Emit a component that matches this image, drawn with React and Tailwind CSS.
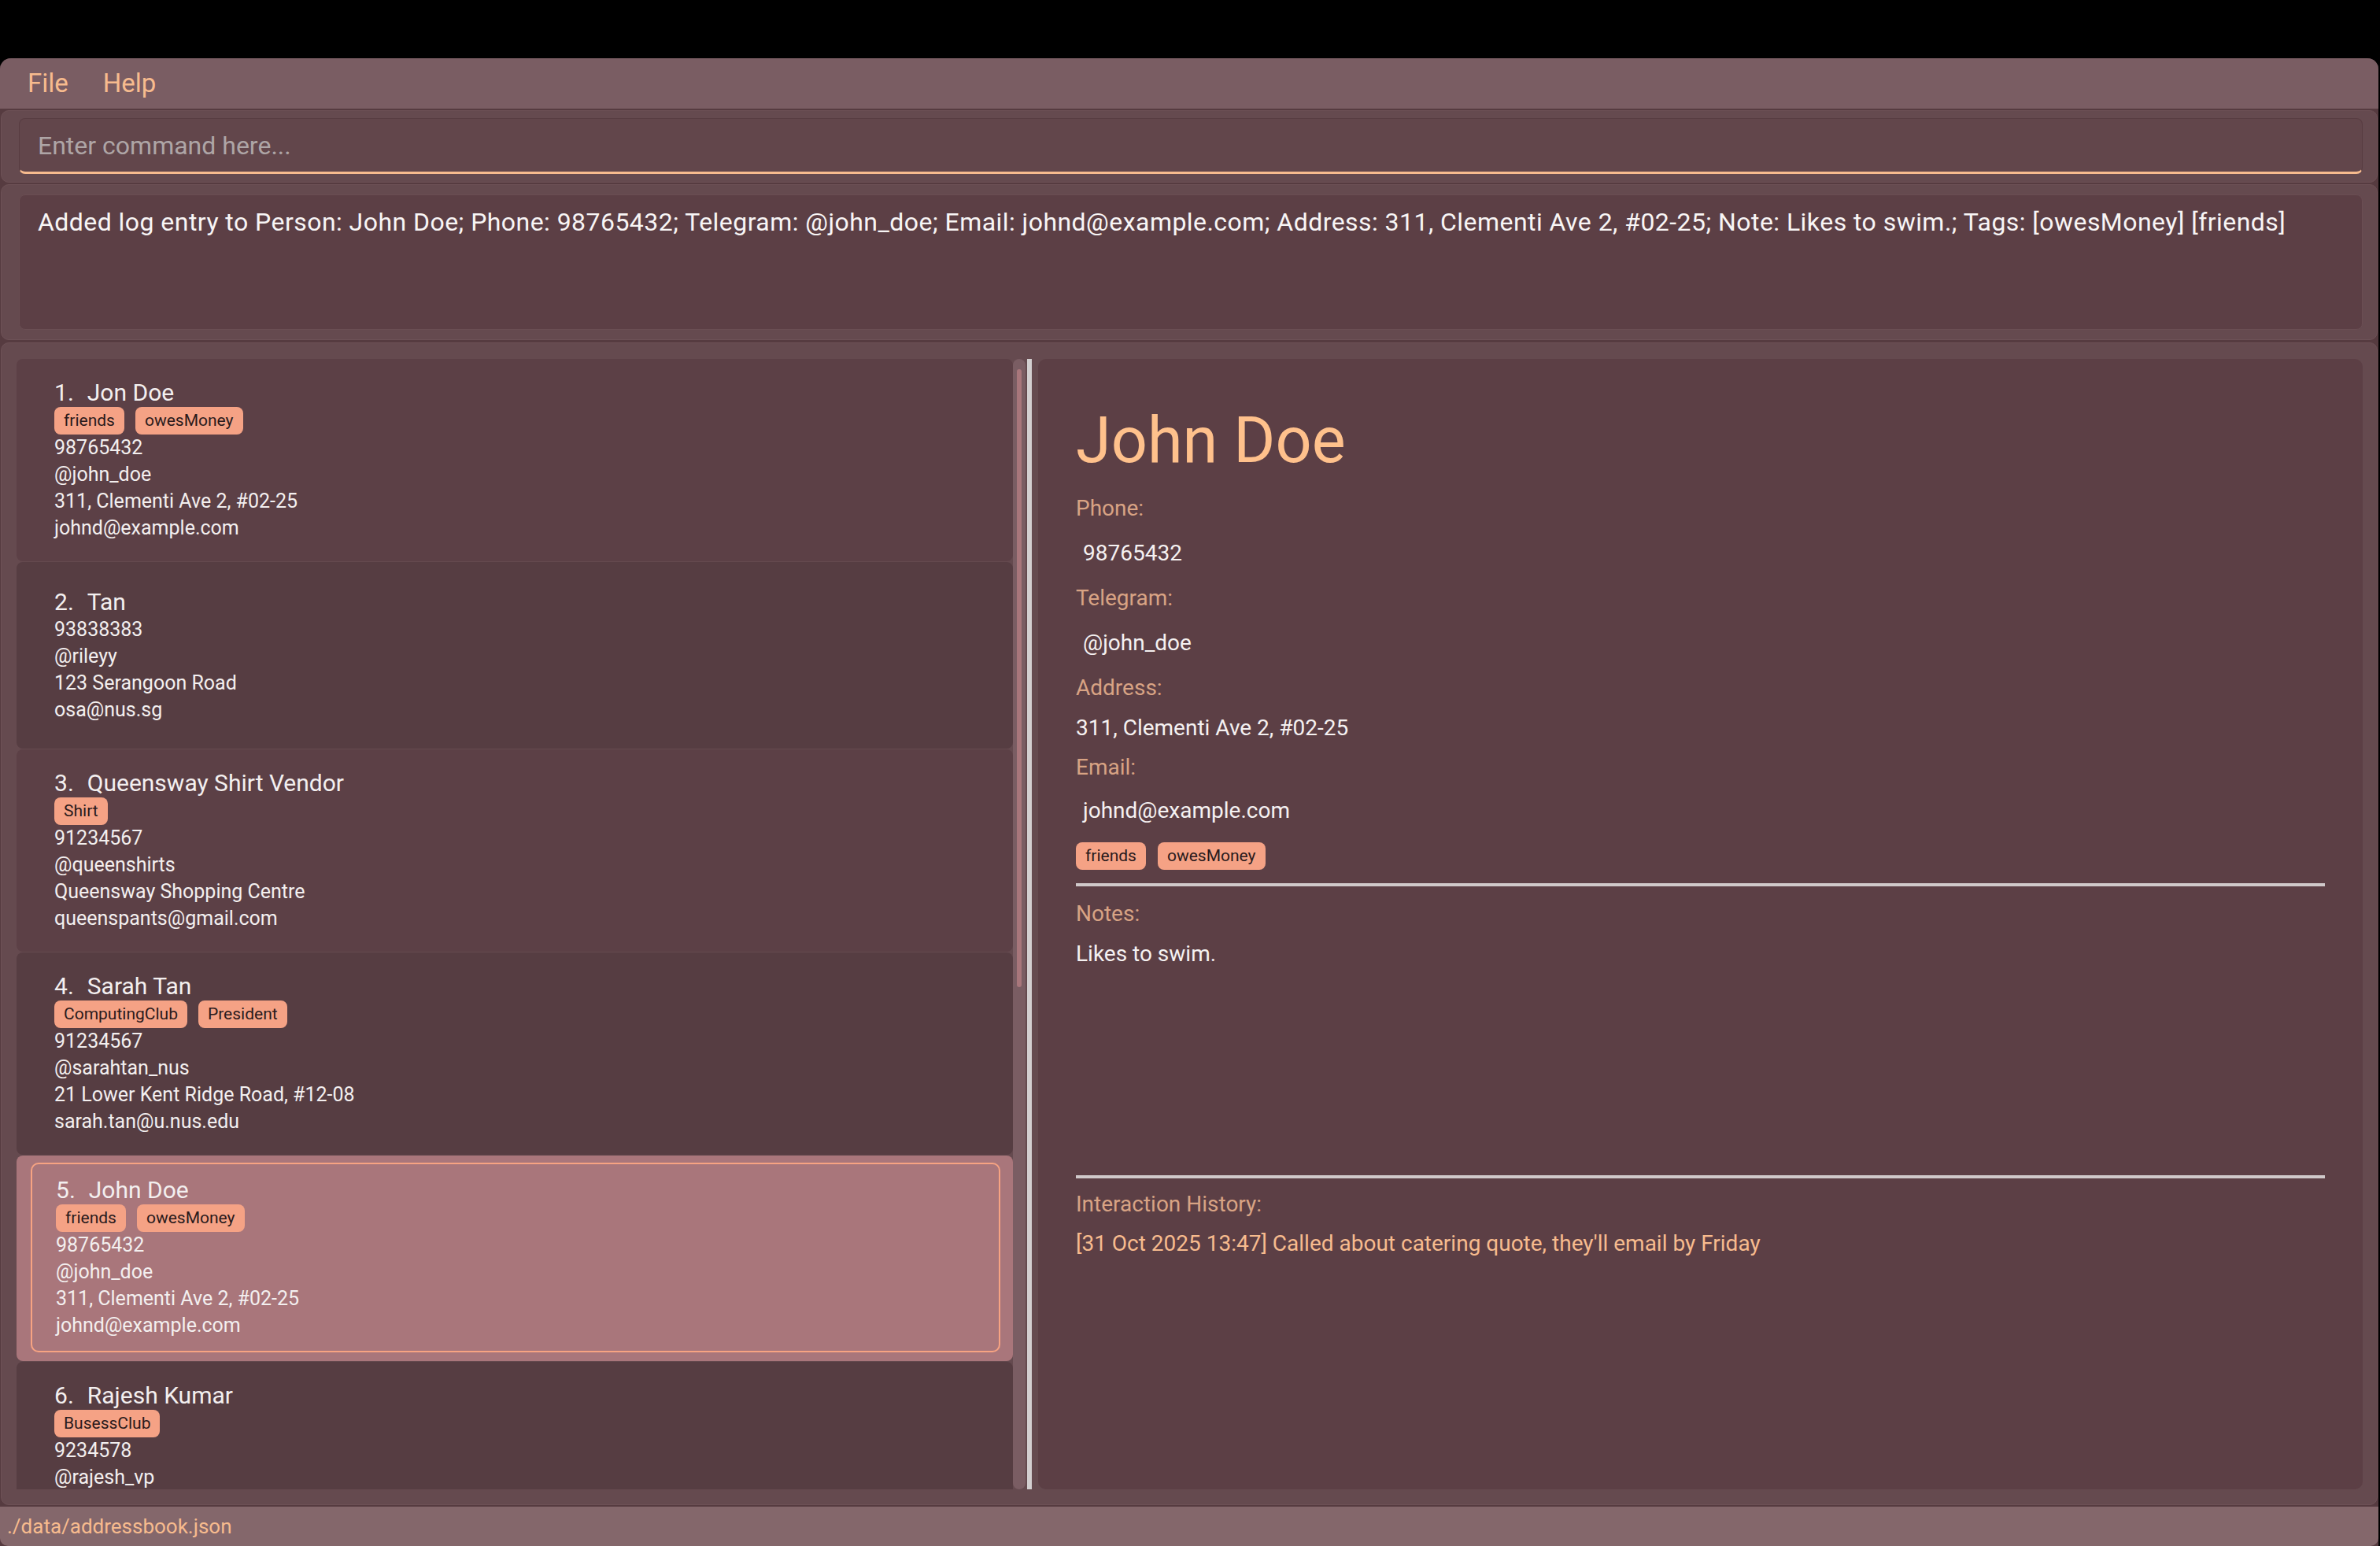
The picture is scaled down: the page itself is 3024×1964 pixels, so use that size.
const persons = [
  { name: 'Jon Doe', tags: ['friends', 'owesMoney'], phone: '98765432', tg: '@john_doe', address: '311, Clementi Ave 2, #02-25', email: 'johnd@example.com' },
  { name: 'Tan', tags: [], phone: '93838383', tg: '@rileyy', address: '123 Serangoon Road', email: 'osa@nus.sg' },
  { name: 'Queensway Shirt Vendor', tags: ['Shirt'], phone: '91234567', tg: '@queenshirts', address: 'Queensway Shopping Centre', email: 'queenspants@gmail.com' },
  { name: 'Sarah Tan', tags: ['ComputingClub', 'President'], phone: '91234567', tg: '@sarahtan_nus', address: '21 Lower Kent Ridge Road, #12-08', email: 'sarah.tan@u.nus.edu' },
  { name: 'John Doe', tags: ['friends', 'owesMoney'], phone: '98765432', tg: '@john_doe', address: '311, Clementi Ave 2, #02-25', email: 'johnd@example.com', selected: true },
  { name: 'Rajesh Kumar', tags: ['BusessClub'], phone: '9234578', tg: '@rajesh_vp', address: 'Blk 30 Geylang Street 29, #06-40', email: 'rajesh@example.com' },
];

const Tag = ({ label }) => (
  <span className="h-[35px] px-[12px] flex items-center rounded-[8px] bg-[#f5a285] text-[#2a1a1c] text-[21px] leading-[35px]">
    {label}
  </span>
);

const CardBody = ({ p, n }) => (
  <>
    <div className="flex text-[30px] leading-[36px] text-[#f3efef]">
      <span>{n}.</span>
      <span className="ml-[17px]">{p.name}</span>
    </div>
    {p.tags.length > 0 && (
      <div className="flex gap-[14px]">
        {p.tags.map(t => <Tag key={t} label={t} />)}
      </div>
    )}
    <div className="text-[25px] leading-[34px] text-[#f3efef]">
      <div>{p.phone}</div>
      <div>{p.tg}</div>
      <div>{p.address}</div>
      <div>{p.email}</div>
    </div>
  </>
);

const PersonCard = ({ p, n }) => {
  if (p.selected) {
    return (
      <div className="shrink-0 rounded-[8px] bg-[#a9767b] pl-[18px] pr-[16px] pt-[9px] pb-[11px]">
        <div className="border-2 border-[#f7a382] rounded-[10px] pl-[30px] py-[15px] flex flex-col">
          <CardBody p={p} n={n} />
        </div>
      </div>
    );
  }
  return (
    <div className={`shrink-0 rounded-[8px] pl-[48px] py-[25px] min-h-[237px] flex flex-col justify-center ${n % 2 === 1 ? 'bg-[#5c4046]' : 'bg-[#563d42]'}`}>
      <CardBody p={p} n={n} />
    </div>
  );
};

const Label = ({ children, className = '' }) => (
  <div className={`text-[28px] leading-[34px] text-[#d8a384] ${className}`}>{children}</div>
);

const Value = ({ children, className = '' }) => (
  <div className={`text-[28px] leading-[34px] text-[#f5f1f1] ${className}`}>{children}</div>
);

export default function App() {
  return (
    <div className="w-[3024px] h-[1964px] bg-black flex flex-col font-['Roboto','Liberation_Sans',sans-serif]">
      <div className="h-[74px] shrink-0" />

      <div className="flex-1 w-[3022px] flex flex-col bg-[#563b40] rounded-t-[14px] overflow-hidden">
        {/* Menu */}
        <div className="h-[64px] shrink-0 bg-[#7a5d63] flex items-center pl-[35px] gap-[44px] text-[33px] leading-[40px] text-[#f7bb8e]">
          <span>File</span>
          <span>Help</span>
        </div>

        {/* Command box */}
        <div className="mt-[2px] h-[92px] shrink-0 mx-[1px] bg-[#654a4f] border border-[#6d5156] rounded-[10px] pl-[22px] pr-[18px] pt-[9px]">
          <div className="h-[71px] bg-[#62464b] border border-[#583d42] border-b-[3px] border-b-[#f7bb8e] rounded-[8px] pl-[23px] flex items-center">
            <span className="text-[32px] leading-[38px] text-[#aea5a6]">Enter command here...</span>
          </div>
        </div>

        {/* Result display */}
        <div className="mt-[2px] h-[198px] shrink-0 mx-[1px] bg-[#654a4f] border border-[#6d5156] rounded-[10px] pl-[22px] pr-[18px] pt-[12px]">
          <div className="h-[172px] bg-[#5c3f45] border border-[#6a4e53] rounded-[8px] px-[23px] pt-[15px]">
            <p className="text-[32px] leading-[38px] tracking-[0.45px] text-[#f8f5f5] whitespace-nowrap">
              Added log entry to Person: John Doe; Phone: 98765432; Telegram: @john_doe; Email: johnd@example.com; Address: 311, Clementi Ave 2, #02-25; Note: Likes to swim.; Tags: [owesMoney] [friends]
            </p>
          </div>
        </div>

        {/* Main */}
        <div className="mt-[3px] h-[1477px] shrink-0 mx-[1px] bg-[#654a4f] border border-[#6d5156] rounded-[10px] pl-[19px] pr-[18px] pt-[20px] pb-[19px] flex">
          {/* List */}
          <div className="w-[1266px] shrink-0 h-full overflow-hidden flex flex-col gap-[1px]">
            {persons.map((p, i) => <PersonCard key={i} p={p} n={i + 1} />)}
          </div>

          {/* Scrollbar */}
          <div className="w-[16px] shrink-0 h-full bg-[#7a5d63] rounded-full flex flex-col items-center pt-[13px]">
            <div className="w-[6px] h-[785px] rounded-full bg-[#a8767b]" />
          </div>

          {/* Divider */}
          <div className="ml-[2px] w-[6px] shrink-0 h-full bg-[#d3cfd0]" />

          {/* Detail panel */}
          <div className="ml-[8px] flex-1 h-full bg-[#5c3f45] rounded-[10px] pl-[48px] pr-[48px] pt-[55px] flex flex-col">
            <h1 className="text-[81px] leading-[97px] text-[#ffc18c]">John Doe</h1>
            <Label className="mt-[21px]">Phone:</Label>
            <Value className="mt-[23px] pl-[9px]">98765432</Value>
            <Label className="mt-[23px]">Telegram:</Label>
            <Value className="mt-[23px] pl-[9px]">@john_doe</Value>
            <Label className="mt-[23px]">Address:</Label>
            <Value className="mt-[17px]">311, Clementi Ave 2, #02-25</Value>
            <Label className="mt-[16px]">Email:</Label>
            <Value className="mt-[21px] pl-[9px]">johnd@example.com</Value>
            <div className="mt-[23px] flex gap-[15px]">
              <Tag label="friends" />
              <Tag label="owesMoney" />
            </div>
            <div className="mt-[17px] h-[4px] bg-[#d0c9ca]" />
            <div className="h-[367px] pt-[18px]">
              <Label>Notes:</Label>
              <Value className="mt-[17px]">Likes to swim.</Value>
            </div>
            <div className="h-[4px] bg-[#d0c9ca]" />
            <Label className="mt-[16px]">Interaction History:</Label>
            <div className="mt-[16px] text-[28px] leading-[34px] text-[#f7bb8e]">
              [31 Oct 2025 13:47] Called about catering quote, they'll email by Friday
            </div>
          </div>
        </div>

        {/* Status bar */}
        <div className="mt-[2px] h-[50px] shrink-0 bg-[#84676b] rounded-b-[10px] pl-[9px] flex items-center">
          <span className="text-[26px] leading-[34px] text-[#f7bb8e]">./data/addressbook.json</span>
        </div>
      </div>
    </div>
  );
}
